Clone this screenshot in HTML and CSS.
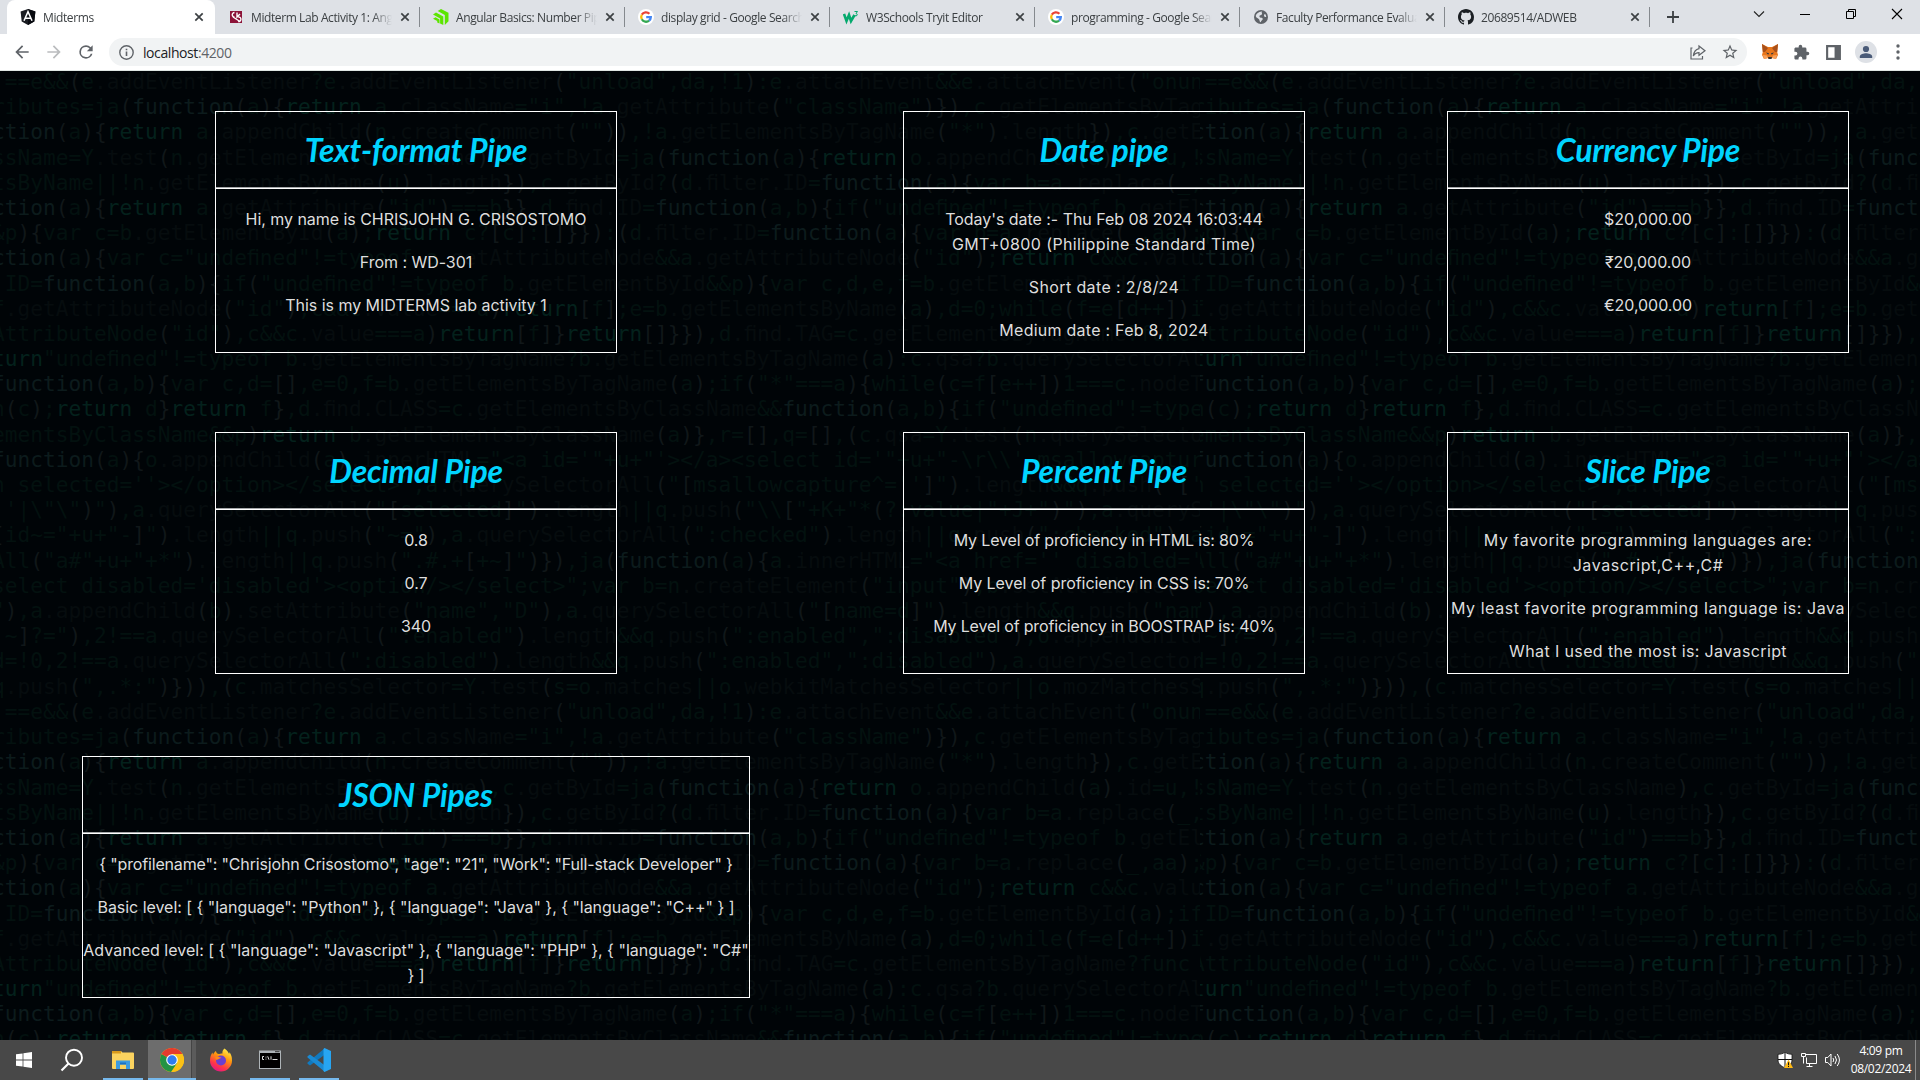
FILE: index.html
```html
<!DOCTYPE html>
<html lang="en">
<head>
<meta charset="utf-8">
<title>Midterms</title>
<link rel="stylesheet" href="styles.css">
</head>
<body>
<svg class="defs" width="0" height="0" aria-hidden="true">
  <symbol id="x" viewBox="0 0 16 16"><path d="M4.3 4.3l7.4 7.4M11.7 4.3l-7.4 7.4" stroke="#3c4043" stroke-width="1.7" fill="none"/></symbol>
  <symbol id="google" viewBox="0 0 16 16"><circle cx="8" cy="8" r="8" fill="#fff"/><g fill="none" stroke-width="2.3"><path d="M11.4 4.8A4.8 4.8 0 0 0 3.8 5.7" stroke="#ea4335"/><path d="M3.8 5.7a4.8 4.8 0 0 0 0 4.6" stroke="#fbbc05"/><path d="M3.8 10.3a4.8 4.8 0 0 0 7.3 1.3" stroke="#34a853"/><path d="M11.1 11.6A4.8 4.8 0 0 0 12.8 8.1H8.2" stroke="#4285f4"/></g></symbol>
</svg>

<header class="tabs">
  <div class="tab active"><svg class="fav" viewBox="0 0 16 16"><path d="M8 0l7.4 2.6-1.1 9.9L8 16l-6.3-3.5L.6 2.6z" fill="#1a1c22"/><path d="M8 0v16l6.3-3.5 1.1-9.9z" fill="#080a10"/><path d="M4 11.8L8 2.6l4 9.2M5.6 9.3h4.8" fill="none" stroke="#fff" stroke-width="1.5"/></svg><span class="label">Midterms</span><svg class="close"><use href="#x"/></svg></div>
  <div class="tab"><svg class="fav" viewBox="0 0 16 16"><path d="M2 2h12v12H2z" fill="#8c1338"/><path d="M6.5 3.5a2.3 2.3 0 1 0 .1 4.6M5 8l7 4.500M10.200 8a2.300 2.300 0 1 1-.1 4.500M9 3.500v4.500l3-3" fill="none" stroke="#fff" stroke-width="1.400"/></svg><span class="label">Midterm Lab Activity 1: Angular</span><svg class="close"><use href="#x"/></svg></div>
  <div class="tab"><svg class="fav" viewBox="0 0 16 16"><path d="M8 0l7.500 3.800v8.400L11.800 16V6L4.700 2.100zM0 5.600l3-2 7.300 4V16l-3.200-1.600V9.600z" fill="#5ce500"/><path d="M0 9.700l2.500-1.400 4 2.200v4l-2.300-1V12z" fill="#5ce500"/></svg><span class="label">Angular Basics: Number Pipes</span><svg class="close"><use href="#x"/></svg></div>
  <div class="tab"><svg class="fav"><use href="#google"/></svg><span class="label">display grid - Google Search</span><svg class="close"><use href="#x"/></svg></div>
  <div class="tab"><svg class="fav" viewBox="0 0 16 16"><path d="M1 5l2.500 7L6 6l2 6 3.500-6" fill="none" stroke="#04a96d" stroke-width="2.600"/><path d="M11.500 2.500h3l-1.500 2c1.500 0 1.800 2.200 0 2.400-.8 0-1.200-.3-1.500-.8" fill="none" stroke="#04a96d"/></svg><span class="label">W3Schools Tryit Editor</span><svg class="close"><use href="#x"/></svg></div>
  <div class="tab"><svg class="fav"><use href="#google"/></svg><span class="label">programming - Google Search</span><svg class="close"><use href="#x"/></svg></div>
  <div class="tab"><svg class="fav" viewBox="0 0 16 16"><circle cx="8" cy="8" r="7" fill="#5f6368"/><path d="M9 2.500c-1 1.500 1 2-.5 3.200S6 6 6.500 7.700s3 .3 3.200 2-1.700 1.300-1.700 3.600c-2-.5-1-2.300-2.300-3.300S3 8.500 2.700 7C3.300 4.500 6 2.200 9 2.500zM12 5c.8.6 1.200 1.800 1.200 3-.8.3-1.500 0-2-.8S11.300 5.200 12 5z" fill="#dee1e6"/></svg><span class="label">Faculty Performance Evaluation</span><svg class="close"><use href="#x"/></svg></div>
  <div class="tab"><svg class="fav" viewBox="0 0 16 16"><path fill="#1b1f23" d="M8 0C3.580 0 0 3.580 0 8c0 3.540 2.290 6.530 5.470 7.590.4.070.55-.17.55-.38 0-.19-.01-.82-.01-1.490-2.010.37-2.530-.49-2.690-.94-.09-.23-.48-.94-.82-1.130-.28-.15-.68-.52-.01-.53.63-.01 1.080.58 1.230.82.72 1.210 1.870.87 2.330.66.070-.52.28-.87.51-1.070-1.780-.2-3.640-.89-3.640-3.950 0-.87.31-1.590.82-2.150-.08-.2-.36-1.020.08-2.120 0 0 .67-.21 2.200.82.64-.18 1.320-.27 2-.27s1.360.09 2 .27c1.530-1.040 2.200-.82 2.200-.82.44 1.100.16 1.920.08 2.120.51.56.82 1.270.82 2.150 0 3.070-1.870 3.750-3.650 3.950.29.25.54.73.54 1.480 0 1.070-.01 1.930-.01 2.200 0 .21.15.46.55.38A8.010 8.010 0 0 0 16 8c0-4.420-3.580-8-8-8z"/></svg><span class="label">20689514/ADWEB</span><svg class="close"><use href="#x"/></svg></div>
  <svg class="newtab" viewBox="0 0 16 16"><path d="M8 2v12M2 8h12" stroke="#3c4043" stroke-width="1.800"/></svg>
  <div class="winbtns">
    <svg viewBox="0 0 16 16"><path d="M3 5.500l5 5 5-5" fill="none" stroke="#222" stroke-width="1.100"/></svg>
    <svg viewBox="0 0 16 16"><path d="M3 8.500h10" stroke="#000"/></svg>
    <svg viewBox="0 0 16 16"><path d="M3.500 5.500h7v7h-7zM5.500 5.500v-2h7v7h-2" fill="none" stroke="#000"/></svg>
    <svg viewBox="0 0 16 16"><path d="M3 3l10 10M13 3L3 13" stroke="#000" stroke-width="1.100"/></svg>
  </div>
</header>

<nav class="toolbar">
  <svg class="ic nav" viewBox="0 0 24 24"><path fill="#5f6368" d="M20 11H7.830l5.590-5.590L12 4l-8 8 8 8 1.410-1.410L7.830 13H20z"/></svg>
  <svg class="ic nav" viewBox="0 0 24 24"><path fill="#babcbe" d="M12 4l-1.410 1.410L16.170 11H4v2h12.170l-5.580 5.590L12 20l8-8z"/></svg>
  <svg class="ic nav" viewBox="0 0 24 24"><path fill="#5f6368" d="M17.650 6.350A7.960 7.960 0 0 0 12 4a8 8 0 1 0 7.730 10h-2.080A6 6 0 1 1 12 6c1.660 0 3.140.69 4.220 1.780L13 11h7V4z"/></svg>
  <div class="omnibox">
    <svg class="ic info" viewBox="0 0 16 16"><circle cx="8" cy="8" r="6.300" fill="none" stroke="#5f6368" stroke-width="1.300"/><path d="M8 7v4.300M8 4.400v1.500" stroke="#5f6368" stroke-width="1.500"/></svg>
    <span class="url">localhost<span class="port">:4200</span></span>
    <svg class="ic share" viewBox="0 0 18 18"><path d="M3.500 5H2v11h11.500v-3M10 3l6 4.700-6 4.600V9.700C7 9.700 5.500 11 4.300 13 4.800 9 6.500 6.500 10 5.700z" fill="none" stroke="#5f6368" stroke-width="1.200"/></svg>
    <svg class="ic" viewBox="0 0 24 24"><path fill="#5f6368" d="M22 9.240l-7.190-.62L12 2 9.190 8.630 2 9.240l5.460 4.730L5.820 21 12 17.270 18.180 21l-1.630-7.030zM12 15.400l-3.760 2.270 1-4.280-3.320-2.880 4.380-.38L12 6.100l1.710 4.040 4.380.38-3.320 2.880 1 4.280z"/></svg>
  </div>
  <svg class="ic" viewBox="0 0 18 18"><path d="M1 1l6 3h4l6-3-.8 8 .8 3-2 4-4-1-1 1H8l-1-1-4 1-2-4 .8-3z" fill="#e8761b"/><path d="M1 1l6 4-3 4-2.200 0zM17 1l-6 4 3 4 2.200 0z" fill="#a8501a"/><path d="M5 9.500l3 .8-.8 1.400zM13 9.500l-3 .8.800 1.400z" fill="#233447"/><path d="M7 14h4l-.5 2h-3z" fill="#333"/><path d="M2 12l4 .5 1 2.500-4 1zM16 12l-4 .5-1 2.500 4 1z" fill="#f5a05a"/></svg>
  <svg class="ic ext" viewBox="0 0 24 24"><path fill="#5f6368" d="M20.500 11H19V7a2 2 0 0 0-2-2h-4V3.500a2.500 2.500 0 0 0-5 0V5H4c-1.100 0-2 .9-2 2v3.800h1.500a2.700 2.700 0 0 1 0 5.400H2V20c0 1.100.9 2 2 2h3.800v-1.500a2.700 2.700 0 0 1 5.400 0V22H17a2 2 0 0 0 2-2v-4h1.500a2.500 2.500 0 0 0 0-5z"/></svg>
  <svg class="ic ext" viewBox="0 0 16 16"><path d="M1 1h14v14H1zM3 3v10h6V3z" fill="#5f6368" fill-rule="evenodd"/></svg>
  <svg class="avatar" viewBox="0 0 22 22"><circle cx="11" cy="11" r="11" fill="#dee1e6"/><circle cx="11" cy="8" r="3.100" fill="#4a5b78"/><path d="M4.800 17v-1.500c0-2.200 4-3.200 6.200-3.200s6.200 1 6.200 3.200V17z" fill="#4a5b78"/></svg>
  <svg class="ic" viewBox="0 0 16 16"><g fill="#5f6368"><circle cx="8" cy="2.700" r="1.500"/><circle cx="8" cy="8" r="1.500"/><circle cx="8" cy="13.300" r="1.500"/></g></svg>
</nav>

<main class="page">
  <div class="code" id="code" aria-hidden="true"></div>
  <div class="grid">
    <section class="card"><h2>Text-format Pipe</h2><div class="body"><p>Hi, my name is CHRISJOHN G. CRISOSTOMO</p><p>From : WD-301</p><p>This is my MIDTERMS lab activity 1</p></div></section>
    <section class="card"><h2>Date pipe</h2><div class="body"><p>Today's date :- Thu Feb 08 2024 16:03:44<br><span class="loose">GMT+0800 (Philippine Standard Time)</span></p><p class="loose">Short date : 2/8/24</p><p class="airy">Medium date : Feb 8, 2024</p></div></section>
    <section class="card"><h2>Currency Pipe</h2><div class="body"><p>$20,000.00</p><p>₹20,000.00</p><p>€20,000.00</p></div></section>
    <section class="card"><h2>Decimal Pipe</h2><div class="body"><p>0.8</p><p>0.7</p><p>340</p></div></section>
    <section class="card"><h2>Percent Pipe</h2><div class="body"><p class="tight">My Level of proficiency in HTML is: 80%</p><p>My Level of proficiency in CSS is: 70%</p><p class="tight">My Level of proficiency in BOOSTRAP is: 40%</p></div></section>
    <section class="card"><h2>Slice Pipe</h2><div class="body"><p class="wider">My favorite programming languages are:<br>Javascript,C++,C#</p><p class="wider">My least favorite programming language is: Java</p><p class="loose">What I used the most is: Javascript</p></div></section>
    <section class="card wide"><h2>JSON Pipes</h2><div class="body"><p class="tight">{ "profilename": "Chrisjohn Crisostomo", "age": "21", "Work": "Full-stack Developer" }</p><p>Basic level: [ { "language": "Python" }, { "language": "Java" }, { "language": "C++" } ]</p><p class="even">Advanced level: [ { "language": "Javascript" }, { "language": "PHP" }, { "language": "C#"<br>} ]</p></div></section>
  </div>
</main>

<footer class="taskbar">
  <div class="task start"><svg viewBox="0 0 24 24"><path d="M4 6.300l6.600-.9v6.200H4zM11.400 5.300L20 4v7.600h-8.600zM4 12.400h6.600v6.200L4 17.700zM11.400 12.400H20V20l-8.600-1.300z" fill="#fff"/></svg></div>
  <div class="task search"><svg viewBox="0 0 24 24"><circle cx="14" cy="9.700" r="8" fill="none" stroke="#fff" stroke-width="1.900"/><path d="M8.500 15.500L1.500 22.500" stroke="#fff" stroke-width="2.200"/></svg></div>
  <div class="task open"><svg viewBox="0 0 24 24"><path d="M1 3h9l1.500 1.500H22q1 0 1 1V20q0 1-1 1H2q-1 0-1-1z" fill="#fbd35f"/><path d="M1 3h9v2.500H1z" fill="#d99a1c"/><path d="M5 12.500h14v8.500h-4v-4.500H9V21H5z" fill="#3c9be0"/><path d="M9 14.500h6v2H9z" fill="#1d72c2"/></svg></div>
  <div class="task open current"><svg viewBox="0 0 24 24"><circle cx="12" cy="12" r="12" fill="#fbc116"/><path d="M12 12L1.600 6A12 12 0 0 0 11 23.950L17.200 15z" fill="#229342"/><path d="M12 12L1.600 6A12 12 0 0 1 22.400 6H12z" fill="#e33b2e"/><path d="M22.400 6H12l5.200 9L12 24A12 12 0 0 0 22.400 6z" fill="#fbc116"/><circle cx="12" cy="12" r="5.800" fill="#fff"/><circle cx="12" cy="12" r="4.700" fill="#2f7cf0"/></svg></div>
  <div class="task"><svg viewBox="0 0 24 24"><defs><linearGradient id="ff" x1=".8" y1="0" x2=".3" y2="1"><stop offset="0" stop-color="#fff44f"/><stop offset=".4" stop-color="#ff980e"/><stop offset=".75" stop-color="#ff3647"/><stop offset="1" stop-color="#e31587"/></linearGradient></defs><path d="M15.500.5c3 2 3.600 3.500 4.500 5.200.5-.3.500-1 .3-1.700C23 7.500 23 10.500 23 12.500A11 11 0 0 1 1 12.500C1 9 2 6.500 3.500 4.500l.5 2.300C4.700 5 6 3.500 7 3c0 1.500 1 2.800 3 3 2-.5 3-.5 3.500-.5-.5-2 .5-3.800 2-5z" fill="url(#ff)"/><circle cx="12" cy="12.500" r="5" fill="#6b3fd0"/><path d="M6 9.500c2-1.500 5-.5 6.500.5-2 .3-3.300 1.500-5 2z" fill="#ff8a16"/></svg></div>
  <div class="task open"><svg viewBox="0 0 24 24"><path d="M1 2.500h22v18.500H1z" fill="#aeb4b8"/><path d="M2 5h20v15H2z" fill="#000"/><path d="M17 3.700h4.500" stroke="#333"/><path d="M6 8.500H4.500v3H6M8 8.700v.8M8 10.700v.8M9.700 8.300l1.300 3.400M13 8.300v3.400M14.500 11.500h5" stroke="#ddd" fill="none"/></svg></div>
  <div class="task open"><svg viewBox="0 0 24 24"><path d="M18 0v6.500L3 17.600.5 15.800v-1.200z" fill="#1079bf"/><path d="M.5 8.200L3 6.400 18 17.500V24L.5 9.400z" fill="#1a8ad4"/><path d="M17.500 0L24 3v18l-6.500 3-1-1V1z" fill="#27a5f2"/></svg></div>
  <div class="tray">
    <svg viewBox="0 0 16 16"><path d="M8 .3c2 1.300 4.500 2 7 2v5.500c0 4-3 6.500-7 8-4-1.500-7-4-7-8V2.300c2.500 0 5-.7 7-2z" fill="#fff" stroke="#111" stroke-width=".8"/><path d="M8 1v14M1 7.500h14" stroke="#111"/><path d="M11.500 7.500L16 16H7z" fill="#fdb813"/><path d="M11.500 10.300v3M11.500 14v1" stroke="#111"/></svg>
    <svg viewBox="0 0 16 16"><path d="M4.500 2.500h11v9h-10v-6M8.500 11.500v3M5.500 14.500h6M.5 1.500h4v3h-4zM2.500 4.500v7" fill="none" stroke="#fff"/></svg>
    <svg viewBox="0 0 16 16"><path d="M.5 5.500h2.300L6 2v12L2.800 10.500H.5zM8 6q1.500 2 0 4M10 4q3 4 0 8M12.200 2q4.500 6 0 12" fill="none" stroke="#fff"/></svg>
    <div class="clock"><span>4:09 pm</span><span>08/02/2024</span></div>
    <i class="peek"></i>
  </div>
</footer>
<script src="code.js"></script>
</body>
</html>
```
FILE: styles.css
```css
* { box-sizing: border-box; }
body {
  margin: 0; width: 1920px; height: 1080px; overflow: hidden;
  display: flex; flex-direction: column;
  font-family: "Open Sans", "Noto Sans", sans-serif;
}
svg { display: block; flex: none; }
.defs { position: absolute; }

/* Tab strip */
.tabs { height: 34px; flex: none; background: #dee1e6; display: flex; align-items: center; padding-left: 7px; }
.tab {
  width: 205px; height: 34px; flex: none; display: flex; align-items: center;
  padding: 0 7px 0 13px; position: relative; font-size: 12px; color: #3c4043;
}
.tab:not(.active)::after { content: ""; position: absolute; right: 0; top: 7px; width: 1px; height: 20px; background: #85898e; }
.tab.active { width: 208px; padding-right: 8px; background: #fff; border-radius: 8px 8px 0 0; }
.fav { width: 16px; height: 16px; }
.label {
  flex: 1; margin: 0 5px 0 7px; white-space: nowrap; overflow: hidden; letter-spacing: -.4px;
  -webkit-mask-image: linear-gradient(90deg, #000 86%, transparent);
  mask-image: linear-gradient(90deg, #000 86%, transparent);
}
.close { width: 16px; height: 16px; }
.newtab { width: 16px; height: 16px; margin-left: 15px; }
.winbtns { margin-left: auto; display: flex; gap: 30px; padding: 0 15px 6px 0; }
.winbtns svg { width: 16px; height: 16px; }

/* Toolbar */
.toolbar {
  height: 37px; flex: none; background: #fff; border-bottom: 1px solid #dfe6e3;
  display: flex; align-items: center; gap: 14px; padding: 0 13px 0 12px;
}
.ic { width: 18px; height: 18px; }
.nav { width: 20px; height: 20px; margin-right: -2px; }
.ext { width: 17px; height: 17px; margin-right: 1px; }
.omnibox {
  flex: 1; height: 28px; border-radius: 14px; background: #f1f3f4; margin: 0 0 0 1px;
  display: flex; align-items: center; padding: 0 8px 0 9px;
}
.info { width: 17px; height: 17px; }
.url { margin-left: 8px; font-size: 14px; letter-spacing: -.42px; color: #202124; }
.port { color: #5f6368; }
.share { margin-left: auto; margin-right: 14px; }
.avatar { width: 22px; height: 22px; margin: 0 -2px; }

/* Page */
.page { position: relative; flex: 1; overflow: hidden; background: #000407; }
.code { position: absolute; inset: -2px 0 0; width: 2400px; display: grid; grid-template-columns: 1200px 1200px; align-content: start; }
.tile {
  width: 1200px; height: 630px; overflow: hidden;
  font: 21.180px/25.200px "DejaVu Sans Mono", monospace; color: #03110f;
}
.line { display: block; margin-left: -8px; height: 25.200px; white-space: pre; }
.kw { color: #0c1b1c; }
.ret { color: #04211c; }
.par { color: #101719; }
.member { color: #060c0e; }
.grid {
  position: relative; display: grid; grid-template-columns: 832px 544px 544px;
  justify-items: center; row-gap: 79px; padding-top: 40px;
}
.card { width: 402px; height: 242px; border: 1px solid #fff; text-align: center; color: #dedede; }
.wide { width: 668px; margin-top: 3px; }
.card h2 {
  margin: 0; height: 76px; border-bottom: 1px solid #a5a7a9;
  font: italic 700 32px/76px Lato, sans-serif; letter-spacing: -.25px; color: #00d4ff;
}
.body { border-top: 1px solid #fff; padding-top: 18px; }
.body p {
  margin: 0 -4px 18px; line-height: 25px; font-size: 16px; white-space: nowrap;
  font-family: Inter, sans-serif; letter-spacing: -.04px;
}
.body .tight { letter-spacing: -.16px; }
.body .even { letter-spacing: 0; }
.body .airy { letter-spacing: .25px; }
.body .loose { letter-spacing: .38px; }
.body .wider { letter-spacing: .57px; }

/* Taskbar */
.taskbar { height: 40px; flex: none; background: #484848; display: flex; color: #fff; }
.task { width: 49px; height: 40px; display: flex; align-items: center; justify-content: center; position: relative; }
.task svg { width: 24px; height: 24px; }
.start { padding-right: 2px; }
.search { padding-right: 3px; }
.task.open::after { content: ""; position: absolute; left: 5px; bottom: 0; width: 40px; height: 2px; background: #76b9ed; }
.task.current { background: linear-gradient(90deg, #6d6d6d 44px, #444 44px, #444 45px, #5b5b5b 45px); background-clip: content-box; padding: 0 0 0 1px; }
.task.current::after { left: 1px; width: 48px; }
.tray { margin-left: auto; display: flex; align-items: center; gap: 8px; }
.tray svg { width: 16px; height: 16px; }
.clock { width: 66px; display: flex; flex-direction: column; align-items: center; font-size: 12px; line-height: 18px; letter-spacing: -.3px; margin-left: -1px; }
.peek { width: 1px; height: 40px; background: #8a8a8a; margin: 0 4px 0 -7px; }
```
FILE: code.js
```javascript
const lines = String.raw` ==e&&(e.addEventListener?e.addEventListener("unload",da,!1):e.attachEvent&&e.attachEvent("onun
ributes=ja(function(a){return a.className="i",!a.getAttribute("className")}),c.getElementsByTag
ction(a){return a.appendChild(n.createComment("")),!a.getElementsByTagName("*").length}),c.getE
ssName=Y.test(n.getElementsByClassName),c.getById=ja(function(a){return o.appendChild(a).id=u,!
tsByName||!n.getElementsByName(u).length}),c.getById?(d.ﬁlter.ID=function(a){var b=a.replace(_,
ction(a){return a.getAttribute("id")===b}},d.ﬁnd.ID=function(a,b){if("undeﬁned"!=typeof b.getEl
&p){var c=b.getElementById(a);return c?[c]:[]}}):(d.ﬁlter.ID=function(a){var b=a.replace(_,aa);
ction(a){var c="undeﬁned"!=typeof a.getAttributeNode&&a.getAttributeNode("id");return c&&c.valu
 ID=function(a,b){if("undeﬁned"!=typeof b.getElementById&&p){var c,d,e,f=b.getElementById(a);if
f.getAttributeNode("id"),c&&c.value===a)return[f];e=b.getElementsByName(a),d=0;while(f=e[d++])i
AttributeNode("id"),c&&c.value===a)return[f]}return[]}}),d.ﬁnd.TAG=c.getElementsByTagName?func
turn"undeﬁned"!=typeof b.getElementsByTagName?b.getElementsByTagName(a):c.qsa?b.querySelectorAl
function(a,b){var c,d=[],e=0,f=b.getElementsByTagName(a);if("*"===a){while(c=f[e++])1===c.nodeT
h(c);return d}return f},d.ﬁnd.CLASS=c.getElementsByClassName&&function(a,b){if("undeﬁned"!=type
ementsByClassName&&p)return b.getElementsByClassName(a)},r=[],q=[],(c.qsa=Y.test(n.querySelecto
function(a){o.appendChild(a).innerHTML="<a id='"+u+"'></a><select id='"+u+"-\r\\' msallowcaptur
n selected=''></option></select>",a.querySelectorAll("[msallowcapture^='']").length&&q.push("['
 '|\"\")"),a.querySelectorAll("[selected]").length||q.push("\\["+K+"*(?:value|"+J+")"),a.queryS
[id~="+u+"-]").length||q.push("~="),a.querySelectorAll(":checked").length||q.push(":checked"),a
All("a#"+u+"+*").length||q.push(".#.+[+~]")}),ja(function(a){a.innerHTML="<a href='' disabled='
select disabled='disabled'><option/></select>";var b=n.createElement("input");b.setAttribute("t
"),a.appendChild(b).setAttribute("name","D"),a.querySelectorAll("[name=d]").length&&q.push("nam
!~]?="),2!==a.querySelectorAll(":enabled").length&&q.push(":enabled",":disabled"),o.appendChild
d=!0,2!==a.querySelectorAll(":disabled").length&&q.push(":enabled",":disabled"),a.querySelector
q.push(",.*:")})),(c.matchesSelector=Y.test(s=o.matches||o.webkitMatchesSelector||o.mozMatchesS`.split("\n");

// Class name of each kind of token in the backdrop
function kind(token) {
  if (/^(function|ction)$/.test(token)) return "kw";
  if (/^(return|turn)$/.test(token)) return "ret";
  if (/^[(){}[\]]$/.test(token)) return "par";
  if (/^\.[a-zA-Zﬁ]+$/.test(token)) return "member";
  return "plain";
}

const tile = document.createElement("div");
tile.className = "tile";
for (const text of lines) {
  const line = document.createElement("span");
  line.className = "line";
  for (const token of text.split(/(function|^ction|return|^turn|[(){}[\]]|\.[a-zA-Zﬁ]+)/)) {
    if (!token) continue;
    const span = document.createElement("span");
    span.className = kind(token);
    span.textContent = token;
    line.append(span);
  }
  tile.append(line);
}
const code = document.getElementById("code");
for (let i = 0; i < 4; i++) code.append(tile.cloneNode(true));
```
